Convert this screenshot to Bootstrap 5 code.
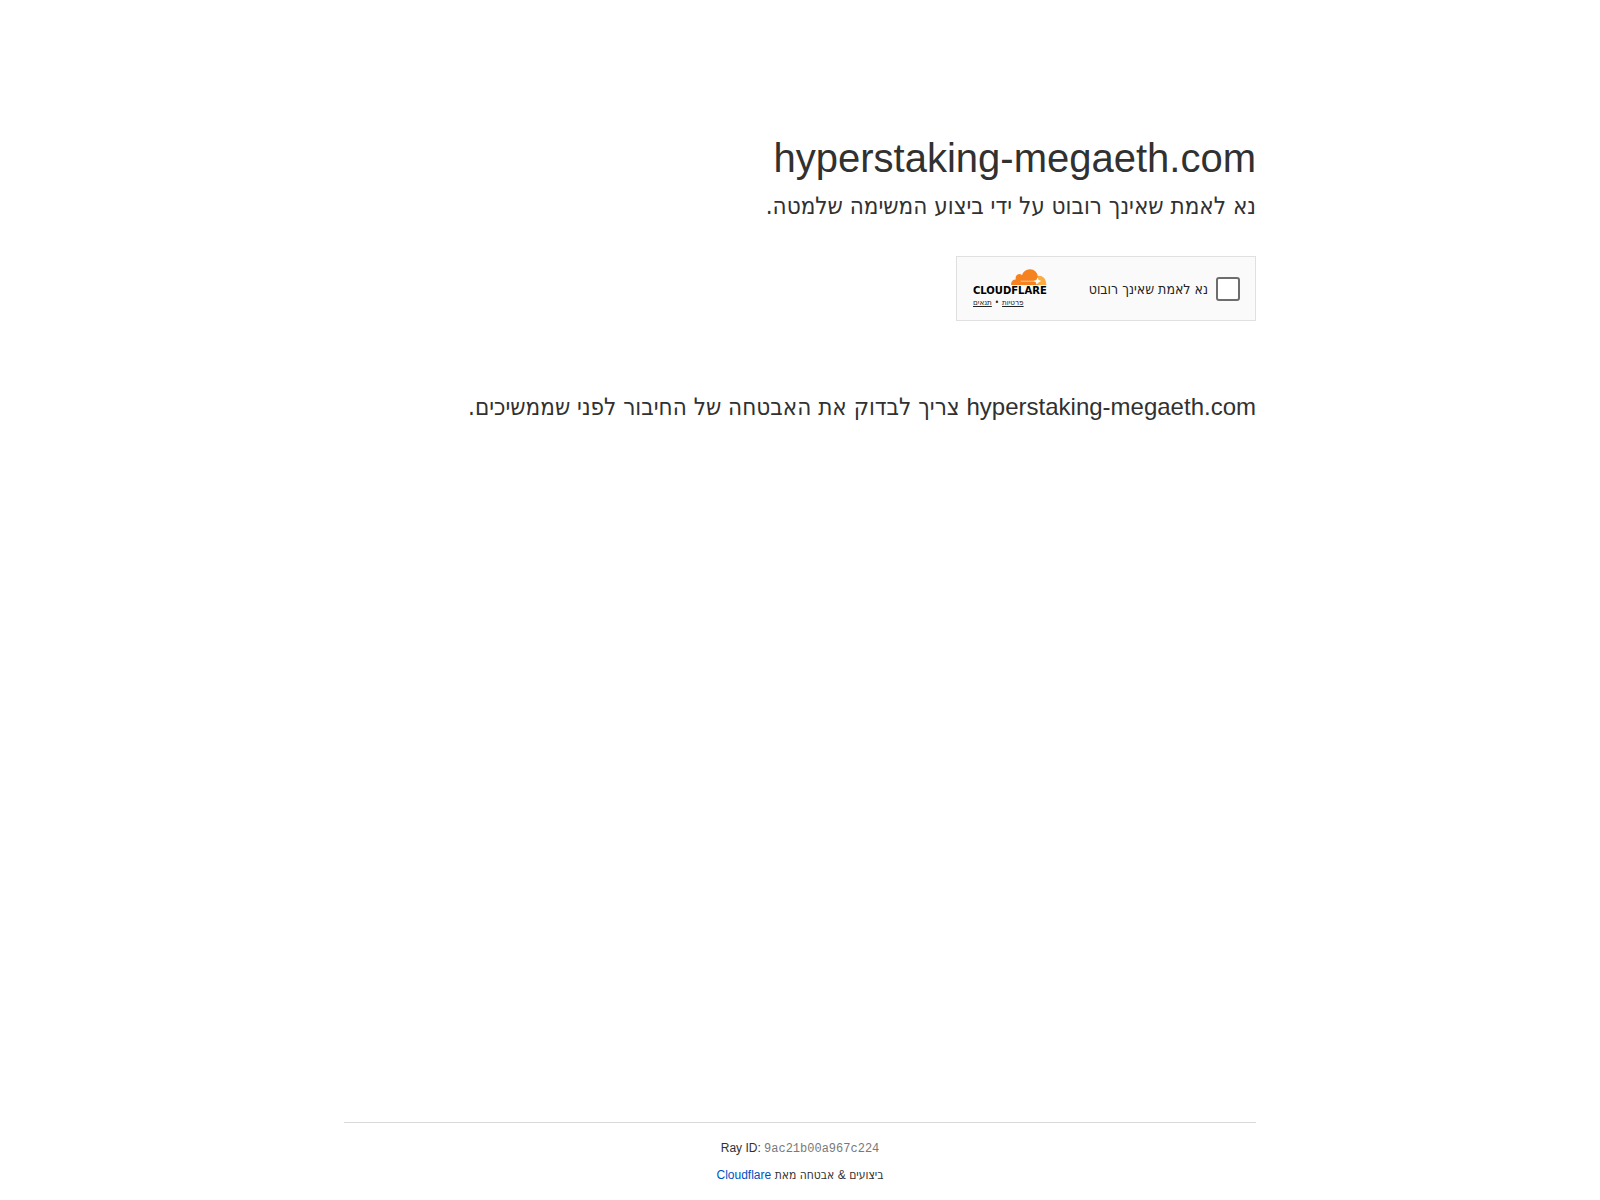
<!DOCTYPE html>
<html lang="he" dir="rtl">
<head>
<meta charset="utf-8">
<meta name="viewport" content="width=device-width, initial-scale=1">
<title>hyperstaking-megaeth.com</title>
<link rel="stylesheet" href="https://cdn.jsdelivr.net/npm/bootstrap@5.3.0/dist/css/bootstrap.min.css">
<style>
body { font-family: "DejaVu Sans Condensed", "DejaVu Sans", sans-serif; color: #313131; }
h1, .latin { font-family: "Liberation Sans", Arial, sans-serif; }
.page-col { width: 100%; max-width: 960px; padding: 0 24px; }
main.page-col { padding-top: 128px; }
h1 { font-size: 40px; line-height: 60px; font-weight: 400; }
h2, .message { font-size: 24px; line-height: 36px; font-weight: 400; }
h2 { margin-bottom: 32px; }
.message { margin-top: 68px; }
.challenge { width: 300px; max-width: 100%; height: 65px; padding: 0 15px; background: #fafafa; border: 1px solid #e0e0e0; color: #232323; }
.challenge label { font-size: 14px; line-height: 20px; }
.challenge .form-check-input { width: 24px; height: 24px; border: 2px solid #6d6d6d; border-radius: 3px; background-color: #fff; }
.brand { width: 75px; }
.brand svg { display: block; width: 75px; height: 29px; }
.brand svg text { font: 700 10px "DejaVu Sans", sans-serif; }
.terms { font-size: 8px; line-height: 10px; gap: 3px; padding-left: 1px; }
.terms a { color: #232323; }
footer .inner { border-top: 1px solid #d9d9d9; padding: 16px 0; font-size: 12px; line-height: 18px; }
footer code { font-family: "Liberation Mono", monospace; font-size: 12px; color: #797979; }
footer a { color: #0051c3; text-decoration: none; }
</style>
<script src="https://cdn.jsdelivr.net/npm/bootstrap@5.3.0/dist/js/bootstrap.bundle.min.js" defer></script>
</head>
<body class="d-flex flex-column min-vh-100">
<main class="page-col mx-auto flex-grow-1">
  <h1 class="m-0">hyperstaking-megaeth.com</h1>
  <h2 class="mt-0">נא לאמת שאינך רובוט על ידי ביצוע המשימה שלמטה.</h2>
  <div class="challenge d-flex align-items-center justify-content-between">
    <div class="d-flex align-items-center gap-2">
      <input class="form-check-input m-0" type="checkbox" id="verify">
      <label for="verify">נא לאמת שאינך רובוט</label>
    </div>
    <div class="brand">
      <svg viewBox="-1 0 75 29" direction="ltr" role="img" aria-label="Cloudflare">
        <path fill="#fbad41" d="M63 7.2Q67 5.8 70 8.1Q72.5 9.8 73 13L73.4 16H61Z"/>
        <path fill="#f6821f" d="M38.2 16Q37.7 13.5 39.4 11.8Q40.8 10.3 42.8 10.4Q42 7.2 44.3 5.7Q46.8 4.2 49 6.2Q50.5 1.6 55.1.5Q59.5-.5 62.6 2.5Q65.3 5.2 65 9.4L64.5 16Z"/>
        <path fill="none" stroke="#fff" stroke-opacity=".7" stroke-width=".8" stroke-linecap="round" d="M48 12.2H66"/>
        <path fill="#fff" d="M64.5 8.2L65.5 10.8L68.2 12L65.7 13.2L63.5 15.8L62.8 13.2L60.5 12L63.4 11Z"/>
        <text x="0" y="25" direction="ltr" fill="#000">CLOUDFLARE</text>
      </svg>
      <div class="terms d-flex justify-content-end"><a href="#">פרטיות</a><span>•</span><a href="#">תנאים</a></div>
    </div>
  </div>
  <div class="message"><span class="latin">hyperstaking-megaeth.com</span> צריך לבדוק את האבטחה של החיבור לפני שממשיכים.</div>
</main>
<footer class="page-col mx-auto text-center">
  <div class="inner">
    <div class="latin mb-2" dir="ltr">Ray ID: <code>9ac21b00a967c224</code></div>
    <div>ביצועים <span class="latin">&amp;</span> אבטחה מאת <a class="latin" href="#">Cloudflare</a></div>
  </div>
</footer>
</body>
</html>
